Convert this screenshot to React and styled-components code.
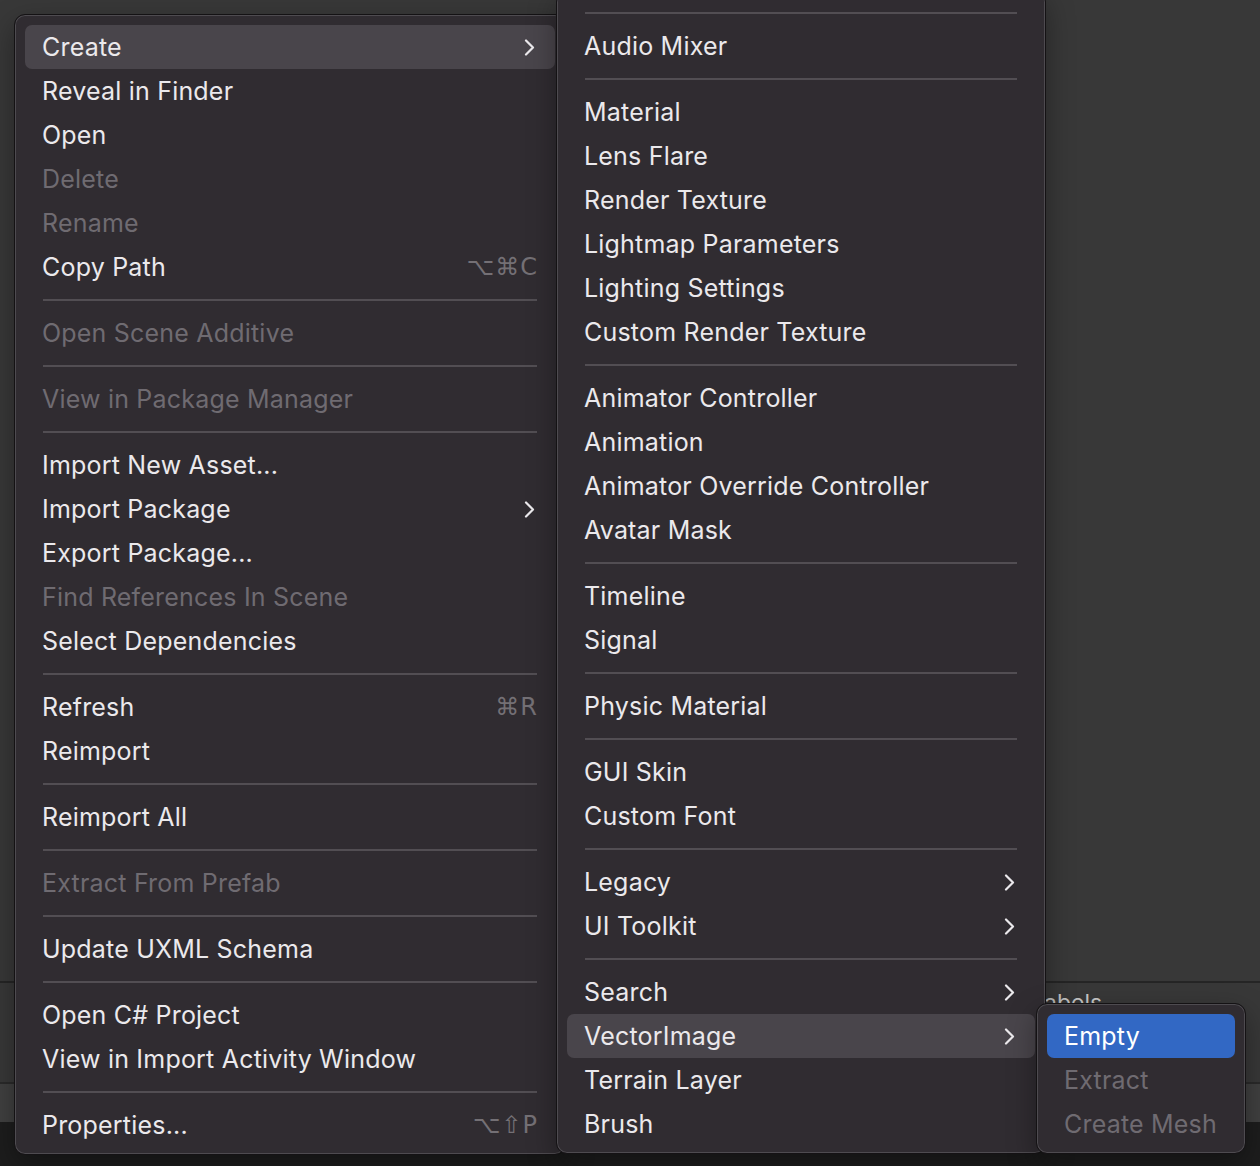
import React from "react";
import styled, { createGlobalStyle } from "styled-components";

const GlobalStyle = createGlobalStyle`
  html, body { margin: 0; padding: 0; background: #383838; }
  body { font-family: Inter, "Noto Sans", "DejaVu Sans", sans-serif; -webkit-font-smoothing: antialiased; }
  * { box-sizing: border-box; }
`;

const Page = styled.div`
  position: relative;
  width: 1260px;
  height: 1166px;
  overflow: hidden;
  display: flex;
  flex-direction: column;
  background: #383838;
`;

const Workspace = styled.div`
  height: 1082px;
  display: flex;
  flex-direction: column;
  background: #383838;
`;

const UpperPane = styled.div`
  height: 981px;
  background: #383838;
`;

const PaneDivider = styled.div`
  height: 2px;
  background: #252525;
`;

const LabelsPane = styled.div`
  flex: 1;
  padding: 6px 0 0 1031px;
  color: #c8c8c8;
  font-size: 23px;
`;

const StatusLine = styled.div`
  height: 2px;
  background: #2a2a2a;
`;

const StatusBar = styled.div`
  height: 38px;
  background: #404040;
`;

const Dock = styled.div`
  flex: 1;
  background: #1d1d1d;
`;

const Menu = styled.div`
  position: absolute;
  left: ${(p) => p.$left}px;
  top: ${(p) => p.$top}px;
  width: ${(p) => p.$width}px;
  padding: 10px 10px 7px;
  background: #302c31;
  border: 1px solid #141214;
  border-radius: 11px;
  box-shadow: inset 0 0 0 1px #4e4b50, 0 10px 28px rgba(0, 0, 0, 0.35);
  z-index: ${(p) => p.$z};
  font-size: 25px;
  letter-spacing: 0.2px;
`;

const Row = styled.div`
  height: 44px;
  display: flex;
  align-items: center;
  padding: 0 19px 0 17px;
  border-radius: 7px;
  color: ${(p) => (p.$disabled ? "#6f6b71" : "#ebe9ec")};
  background: ${(p) =>
    p.$active === "blue" ? "#3268c4" : p.$active ? "#49454b" : "transparent"};
  ${(p) => p.$active === "blue" && "color: #ffffff;"}
  white-space: nowrap;
  line-height: 1;
`;

const Label = styled.span`
  flex: 1;
  padding-top: 1px;
`;

const Shortcut = styled.span`
  color: #747075;
  font-family: "DejaVu Sans", Inter, sans-serif;
  font-size: 24px;
  letter-spacing: 1px;
  margin-right: -2px;
`;

const Chevron = styled.svg`
  width: 11px;
  height: 17px;
  margin-right: 1px;
  flex: none;
`;

const Separator = styled.div`
  height: 22px;
  padding: 10px 18px 0;
  &::after {
    content: "";
    display: block;
    height: 2px;
    background: #524e53;
  }
`;

const ChevronIcon = () => (
  <Chevron viewBox="0 0 11 17">
    <path d="M2 1.5l7 7-7 7" fill="none" stroke="#ebe9ec" strokeWidth="2.2" strokeLinecap="round" strokeLinejoin="round" />
  </Chevron>
);

const S = "sep";

const menu1 = [
  { t: "Create", sub: true, active: true },
  { t: "Reveal in Finder" },
  { t: "Open" },
  { t: "Delete", d: true },
  { t: "Rename", d: true },
  { t: "Copy Path", k: "⌥⌘C" },
  S,
  { t: "Open Scene Additive", d: true },
  S,
  { t: "View in Package Manager", d: true },
  S,
  { t: "Import New Asset..." },
  { t: "Import Package", sub: true },
  { t: "Export Package..." },
  { t: "Find References In Scene", d: true },
  { t: "Select Dependencies" },
  S,
  { t: "Refresh", k: "⌘R" },
  { t: "Reimport" },
  S,
  { t: "Reimport All" },
  S,
  { t: "Extract From Prefab", d: true },
  S,
  { t: "Update UXML Schema" },
  S,
  { t: "Open C# Project" },
  { t: "View in Import Activity Window" },
  S,
  { t: "Properties...", k: "⌥⇧P" },
];

const menu2 = [
  S,
  { t: "Audio Mixer" },
  S,
  { t: "Material" },
  { t: "Lens Flare" },
  { t: "Render Texture" },
  { t: "Lightmap Parameters" },
  { t: "Lighting Settings" },
  { t: "Custom Render Texture" },
  S,
  { t: "Animator Controller" },
  { t: "Animation" },
  { t: "Animator Override Controller" },
  { t: "Avatar Mask" },
  S,
  { t: "Timeline" },
  { t: "Signal" },
  S,
  { t: "Physic Material" },
  S,
  { t: "GUI Skin" },
  { t: "Custom Font" },
  S,
  { t: "Legacy", sub: true },
  { t: "UI Toolkit", sub: true },
  S,
  { t: "Search", sub: true },
  { t: "VectorImage", sub: true, active: true },
  { t: "Terrain Layer" },
  { t: "Brush" },
];

const menu3 = [
  { t: "Empty", active: "blue" },
  { t: "Extract", d: true },
  { t: "Create Mesh", d: true },
];

const MenuItems = ({ items }) =>
  items.map((it, i) =>
    it === S ? (
      <Separator key={i} />
    ) : (
      <Row key={i} $disabled={it.d} $active={it.active}>
        <Label>{it.t}</Label>
        {it.k && <Shortcut>{it.k}</Shortcut>}
        {it.sub && <ChevronIcon />}
      </Row>
    )
  );

export default function App() {
  return (
    <>
      <GlobalStyle />
      <Page>
        <Workspace>
          <UpperPane />
          <PaneDivider />
          <LabelsPane>Labels</LabelsPane>
        </Workspace>
        <StatusLine />
        <StatusBar />
        <Dock />

        <Menu $left={14} $top={14} $width={552} $z={1}>
          <MenuItems items={menu1} />
        </Menu>
        <Menu $left={556} $top={-9} $width={490} $z={2}>
          <MenuItems items={menu2} />
        </Menu>
        <Menu $left={1036} $top={1003} $width={210} $z={3}>
          <MenuItems items={menu3} />
        </Menu>
      </Page>
    </>
  );
}
